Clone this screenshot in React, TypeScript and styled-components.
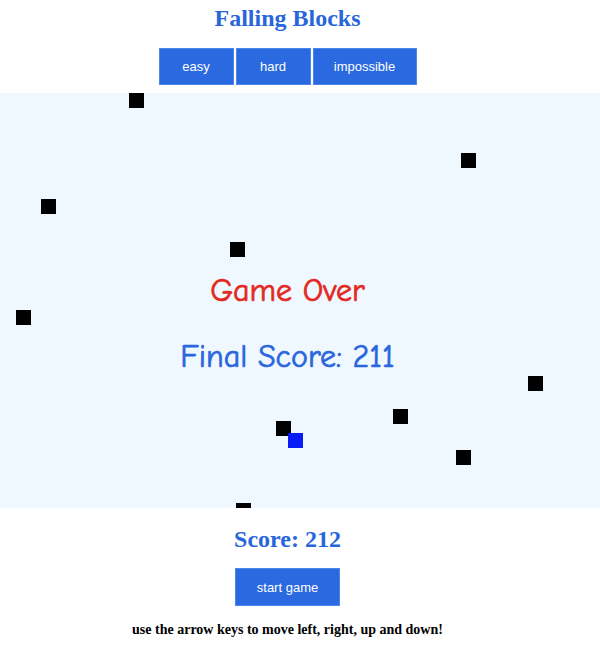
import React from "react";
import styled, { createGlobalStyle } from "styled-components";

const Global = createGlobalStyle`
  html, body { margin: 0; padding: 0; background: #ffffff; overflow-x: hidden; }
  body { font-family: "Liberation Serif", "Times New Roman", serif; }
`;

const Page = styled.div`
  display: flex;
  flex-direction: column;
  align-items: center;
  width: 575px;
`;

const Title = styled.h1`
  margin: 0;
  height: 36px;
  line-height: 36px;
  font-size: 24px;
  font-weight: bold;
  color: #2866dc;
`;

const ButtonRow = styled.div`
  display: flex;
  gap: 2px;
  margin-top: 12px;
`;

const Btn = styled.button<{ $w: number }>`
  width: ${(p) => p.$w}px;
  height: 37px;
  padding: 0;
  border: 1px solid #4a86ee;
  background: #2a69e0;
  color: #ffffff;
  font-family: "Liberation Sans", Arial, sans-serif;
  font-size: 13px;
  cursor: pointer;
`;

const Board = styled.div`
  position: relative;
  align-self: flex-start;
  margin-top: 8px;
  width: 600px;
  height: 415px;
  background: #f0f8ff;
  overflow: hidden;
`;

const Message = styled.div`
  width: 575px;
  display: flex;
  flex-direction: column;
  align-items: center;
`;

const Block = styled.div<{ $player?: boolean }>`
  position: absolute;
  width: 15px;
  height: 15px;
  background: ${(p) => (p.$player ? "#0a1cf5" : "#000000")};
`;

const Comic = styled.div<{ $red?: boolean }>`
  font-family: "Comic Sans MS", "Comic Neue", cursive;
  font-size: 32px;
  line-height: 40px;
  color: ${(p) => (p.$red ? "#e3281e" : "#2a66dc")};
  -webkit-text-stroke: 0.7px currentColor;
`;

const OverText = styled(Comic)`
  margin-top: 178px;
`;

const FinalText = styled(Comic)`
  margin-top: 26px;
`;

const Score = styled.div`
  margin-top: 16px;
  height: 30px;
  line-height: 30px;
  font-size: 24px;
  font-weight: bold;
  color: #2866dc;
`;

const StartBtn = styled(Btn)`
  margin-top: 14px;
  height: 38px;
`;

const Help = styled.div`
  margin-top: 14px;
  line-height: 20px;
  font-size: 14px;
  font-weight: bold;
  color: #000;
`;

const blocks: [number, number][] = [
  [129, 0],
  [461, 60],
  [41, 106],
  [230, 149],
  [16, 217],
  [528, 283],
  [393, 316],
  [276, 328],
  [456, 357],
  [236, 410],
];

export default function App() {
  return (
    <Page>
      <Global />
      <Title>Falling Blocks</Title>
      <ButtonRow>
        <Btn $w={75}>easy</Btn>
        <Btn $w={75}>hard</Btn>
        <Btn $w={104}>impossible</Btn>
      </ButtonRow>
      <Board>
        {blocks.map(([x, y], i) => (
          <Block key={i} style={{ left: x, top: y }} />
        ))}
        <Block $player style={{ left: 288, top: 340 }} />
        <Message>
          <OverText $red>Game Over</OverText>
          <FinalText>Final Score: 211</FinalText>
        </Message>
      </Board>
      <Score>Score: 212</Score>
      <StartBtn $w={105}>start game</StartBtn>
      <Help>use the arrow keys to move left, right, up and down!</Help>
    </Page>
  );
}
